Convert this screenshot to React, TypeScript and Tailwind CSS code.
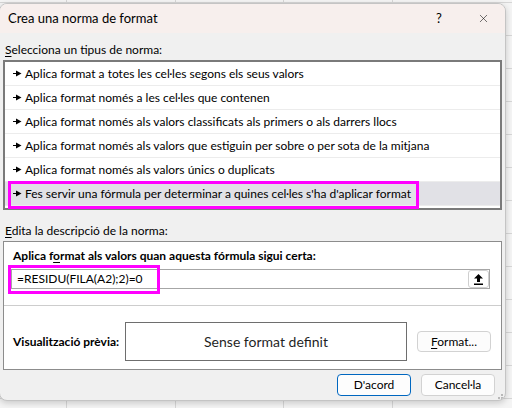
import { X } from 'lucide-react';

const rules = [
  'Aplica format a totes les cel·les segons els seus valors',
  'Aplica format només a les cel·les que contenen',
  'Aplica format només als valors classificats als primers o als darrers llocs',
  'Aplica format només als valors que estiguin per sobre o per sota de la mitjana',
  'Aplica format només als valors únics o duplicats',
  "Fes servir una fórmula per determinar a quines cel·les s'ha d'aplicar format",
];

const font = 'font-["Lato","Noto_Sans",sans-serif]';

function Bullet() {
  return (
    <svg width="9" height="7" viewBox="0 0 9 7" className="shrink-0">
      <rect x="0" y="3" width="4" height="1" fill="#000" />
      <polygon points="3,0.5 8.5,3.5 3,6.5" fill="#000" />
    </svg>
  );
}

function UpArrow() {
  return (
    <svg width="9" height="11" viewBox="0 0 9 11">
      <polygon points="4.5,0 9,4.5 6,4.5 6,8 3,8 3,4.5 0,4.5" fill="#000" />
      <rect x="0" y="9.5" width="9" height="1.5" fill="#000" />
    </svg>
  );
}

function Grip() {
  const dots = [
    [6, 0], [3, 3], [6, 3], [0, 6], [3, 6], [6, 6],
  ];
  return (
    <svg width="8" height="8" viewBox="0 0 8 8">
      {dots.map(([x, y], i) => (
        <rect key={i} x={x} y={y} width="2" height="2" fill="#b8b8b8" />
      ))}
    </svg>
  );
}

export default function App() {
  return (
    <div className={`relative w-[512px] h-[408px] overflow-hidden bg-[#f4f4f4] text-[12px] text-black ${font}`}>
      {/* spreadsheet behind the dialog */}
      <div className="absolute inset-0 flex">
        <div className="w-[67px] border-r border-[#d6d6d6]" />
        <div className="w-[109px] border-r border-[#d6d6d6]" />
        <div className="w-[108px] border-r border-[#d6d6d6]" />
        <div className="w-[109px] border-r border-[#d6d6d6]" />
        <div className="flex-1" />
      </div>
      <div className="absolute inset-0 flex flex-col pt-[2px]">
        {Array.from({ length: 13 }).map((_, i) => (
          <div key={i} className="h-[33px] shrink-0 border-t border-[#d6d6d6]" />
        ))}
      </div>

      <div className="relative pt-[4px]">
        <div className="w-[507px] h-[398px] flex flex-col bg-[#f0f0f0] rounded-[8px] border border-[#c4c4c4] shadow-[0_2px_6px_rgba(0,0,0,0.18)] overflow-hidden -ml-[1px] -mt-[1px]">
          {/* title bar */}
          <div className="h-[29px] shrink-0 flex items-center bg-[#f7efed] pl-[8px]">
            <span className="flex-1 text-[13px]">Crea una norma de format</span>
            <span className="w-[8px] text-[13px] mr-[33px]">?</span>
            <X size={13} strokeWidth={1} className="mr-[15px]" />
          </div>

          <div className="flex flex-col px-[3px]">
            <div className="mt-[9px] h-[16px] leading-[16px] pl-[2px]">
              <span className="underline underline-offset-2">S</span>elecciona un tipus de norma:
            </div>

            {/* rule type list */}
            <div className="relative mt-[2px] h-[150px] border-2 border-[#7a7a7a] bg-white">
              {rules.map((r, i) => (
                <div
                  key={i}
                  className={`h-[24px] flex items-center gap-[3px] pl-[8px] border-b border-[#ececec] ${i === rules.length - 1 ? 'bg-[#e1e1e6]' : ''}`}
                >
                  <Bullet />
                  <span className="whitespace-nowrap">{r}</span>
                </div>
              ))}
              <div className="absolute left-[3px] top-[119px] w-[411px] h-[28px] border-[3px] border-[#ff00ff]" />
            </div>

            <div className="mt-[13px] h-[16px] leading-[16px] pl-[2px]">
              <span className="underline underline-offset-2">E</span>dita la descripció de la norma:
            </div>

            {/* rule description */}
            <div className="mt-[2px] h-[129px] border border-[#8c8c8c] bg-white flex flex-col">
              <div className="mt-[6px] h-[16px] leading-[16px] pl-[9px] font-bold">
                Aplica f<span className="underline underline-offset-2">o</span>rmat als valors quan aquesta fórmula sigui certa:
              </div>
              <div className="relative mt-[5px] ml-[7px] w-[479px] h-[20px] border border-[#a6a6a6] flex items-center">
                <span className="flex-1 pl-[5px]">=RESIDU(FILA(A2);2)=0</span>
                <div className="w-[21px] h-[18px] rounded-[3px] border border-[#cfcfcf] bg-white flex items-center justify-center">
                  <UpArrow />
                </div>
                <div className="absolute -left-[4px] -top-[5px] w-[152px] h-[29px] border-[3px] border-[#ff00ff]" />
              </div>
              <div className="mt-[16px] border-t border-[#cdcdcd]" />
              <div className="mt-[16px] flex items-center">
                <span className="w-[121px] pl-[9px] font-bold whitespace-nowrap">Visualització prèvia:</span>
                <div className="w-[282px] h-[39px] border border-[#6e6e6e] flex items-center justify-center text-[14px] text-[#1f1f1f]">
                  Sense format definit
                </div>
                <button className="ml-[10px] w-[74px] h-[21px] rounded-[4px] border border-[#d2d2d2] bg-[#fcfcfc] leading-none">
                  <span className="underline underline-offset-2">F</span>ormat...
                </button>
              </div>
            </div>
          </div>

          <div className="relative flex justify-end gap-[10px] pr-[10px] mt-[4px]">
            <button className="w-[74px] h-[22px] rounded-[4px] border border-[#0067c0] bg-[#fdfdfd] leading-none">
              D'acord
            </button>
            <button className="w-[74px] h-[22px] rounded-[4px] border border-[#d2d2d2] bg-[#fdfdfd] leading-none">
              Cancel·la
            </button>
            <div className="absolute right-[2px] top-[20px]">
              <Grip />
            </div>
          </div>
        </div>
      </div>
    </div>
  );
}
